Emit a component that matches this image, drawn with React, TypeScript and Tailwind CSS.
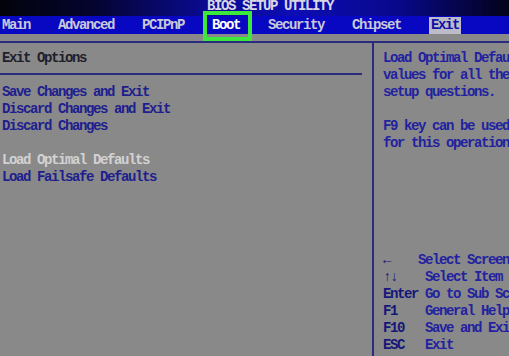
import React from 'react';

const mono = { fontFamily: '"Liberation Mono", "DejaVu Sans Mono", monospace' };

const tabs = ['Main', 'Advanced', 'PCIPnP', 'Boot', 'Security', 'Chipset'];

const help: [string, string][] = [
  ['←    ', 'Select Screen'],
  ['↑↓    ', 'Select Item'],
  ['Enter ', 'Go to Sub Screen'],
  ['F1    ', 'General Help'],
  ['F10   ', 'Save and Exit'],
  ['ESC   ', 'Exit'],
];

export default function App() {
  return (
    <div
      className="relative w-[509px] h-[356px] overflow-hidden bg-[#898989] text-[14px] leading-[17px] tracking-[-1.4px] font-bold whitespace-pre"
      style={mono}
    >
      {/* title bar */}
      <div className="h-[16px] pl-[207px] text-[#d8d8e4] leading-[13px] bg-[linear-gradient(90deg,#03030c_0%,#04042e_18%,#0a0a90_40%,#0d0db4_58%,#08088c_78%,#020218_100%)]">
        BIOS SETUP UTILITY
      </div>

      {/* menu bar */}
      <div className="h-[18px] bg-[#0808c2] flex items-center pl-[2px] gap-[28px] text-[#c9c9d9]">
        {tabs.map((t) => (
          <span key={t} className={t === 'Boot' ? 'text-white' : ''}>{t}</span>
        ))}
        <span className="px-[2px] bg-[#bcbcc8] text-[#1010a8]">Exit</span>
      </div>

      <div className="h-[7px]" />

      <div className="flex h-[315px] border-t-2 border-[#2b2b7e]">
        {/* left panel */}
        <div className="w-[372px] shrink-0 pt-[7px] pr-[10px]">
          <div className="pl-[2px] pb-[6px] border-b-2 border-[#2b2b7e] text-[#20202c]">Exit Options</div>
          <div className="mt-[9px] pl-[2px] text-[#1e1e8e]">
            <div>Save Changes and Exit</div>
            <div>Discard Changes and Exit</div>
            <div>Discard Changes</div>
            <div>&nbsp;</div>
            <div className="text-[#d2d2d2]">Load Optimal Defaults</div>
            <div>Load Failsafe Defaults</div>
          </div>
        </div>

        {/* right panel */}
        <div className="w-[137px] shrink-0 overflow-hidden flex flex-col border-l-2 border-[#2b2b7e] pl-[9px] pt-[7px] pb-[2px] text-[#2222a0]">
          <div>
            <div>Load Optimal Default</div>
            <div>values for all the</div>
            <div>setup questions.</div>
            <div>&nbsp;</div>
            <div>F9 key can be used</div>
            <div>for this operation.</div>
          </div>
          <div className="mt-auto">
            {help.map(([k, d]) => (
              <div key={d}>
                <span className="text-[#16167a]">{k}</span>
                <span>{d}</span>
              </div>
            ))}
          </div>
        </div>
      </div>

      {/* green highlight annotation */}
      <div className="absolute left-[203px] top-[11px] w-[49px] h-[30px] border-4 border-[#3be83b]" />
    </div>
  );
}
